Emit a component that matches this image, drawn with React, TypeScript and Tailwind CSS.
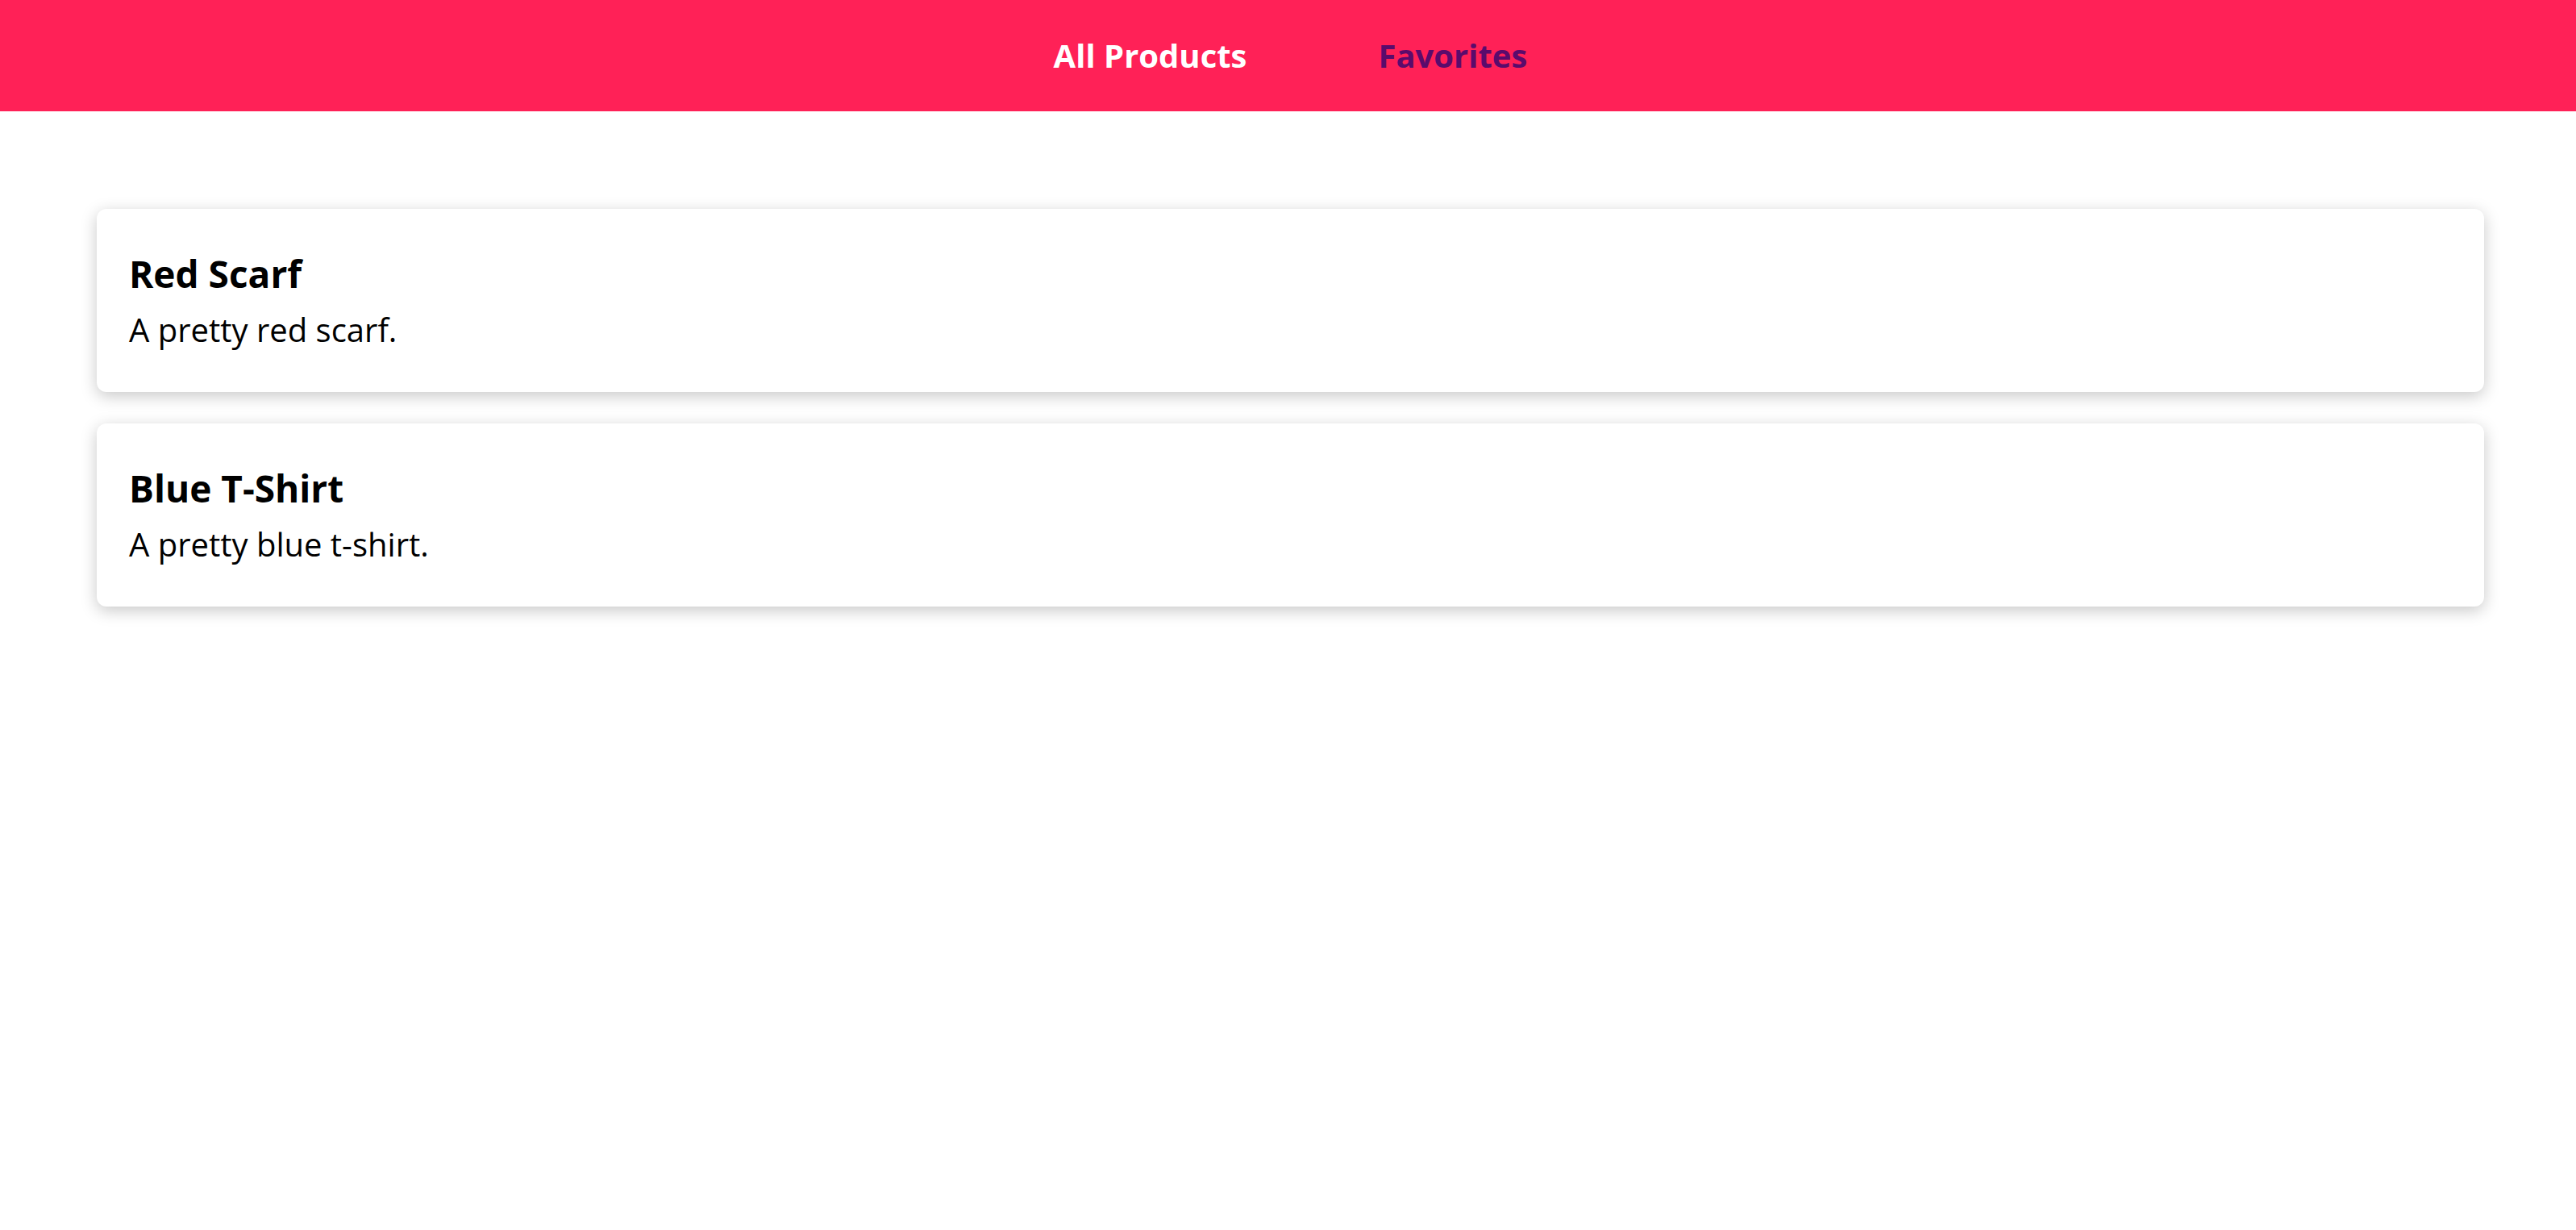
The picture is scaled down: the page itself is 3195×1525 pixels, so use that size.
import React from "react";

const products = [
  { title: "Red Scarf", description: "A pretty red scarf." },
  { title: "Blue T-Shirt", description: "A pretty blue t-shirt." },
];

export default function App() {
  return (
    <div className="min-h-screen bg-white font-['Open_Sans',sans-serif] text-black">
      <header className="h-[138px] bg-[#ff2157] flex items-center justify-center">
        <nav className="flex items-center gap-[163px] pl-[6px]">
          <a className="text-[40px] font-bold leading-[54px] text-white">All Products</a>
          <a className="text-[40px] font-bold leading-[54px] text-[#5a0b6c]">Favorites</a>
        </nav>
      </header>
      <main className="ml-[120px] mr-[114px] pt-[121px] flex flex-col gap-[39px]">
        {products.map((p) => (
          <div
            key={p.title}
            className="bg-white rounded-[12px] shadow-[0_5px_20px_rgba(0,0,0,0.22)] px-[40px] py-[50px]"
          >
            <h2 className="text-[46px] font-bold leading-[61px]">{p.title}</h2>
            <p className="mt-[11px] text-[40px] leading-[55px]">{p.description}</p>
          </div>
        ))}
      </main>
    </div>
  );
}
